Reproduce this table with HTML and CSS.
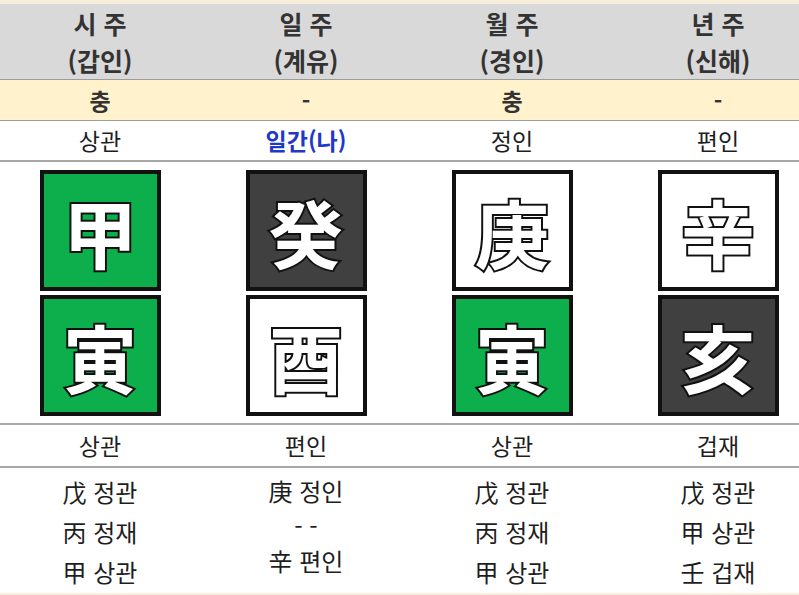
FILE: index.html
```html
<!DOCTYPE html>
<html lang="ko">
<head>
<meta charset="utf-8">
<title>사주 원국</title>
<link rel="stylesheet" href="styles.css">
</head>
<body>
<div class="table">
  <div class="row head">
    <div class="cell"><div>시 주</div><div>(갑인)</div></div>
    <div class="cell"><div>일 주</div><div>(계유)</div></div>
    <div class="cell"><div>월 주</div><div>(경인)</div></div>
    <div class="cell"><div>년 주</div><div>(신해)</div></div>
  </div>
  <div class="row clash">
    <div class="cell">충</div>
    <div class="cell">-</div>
    <div class="cell">충</div>
    <div class="cell">-</div>
  </div>
  <div class="row god">
    <div class="cell">상관</div>
    <div class="cell me">일간(나)</div>
    <div class="cell">정인</div>
    <div class="cell">편인</div>
  </div>
  <div class="row tiles">
    <div class="cell stack">
      <div class="tile green">甲</div>
      <div class="tile green">寅</div>
    </div>
    <div class="cell stack">
      <div class="tile dark">癸</div>
      <div class="tile white">酉</div>
    </div>
    <div class="cell stack">
      <div class="tile white">庚</div>
      <div class="tile green">寅</div>
    </div>
    <div class="cell stack">
      <div class="tile white">辛</div>
      <div class="tile dark">亥</div>
    </div>
  </div>
  <div class="row god2">
    <div class="cell">상관</div>
    <div class="cell">편인</div>
    <div class="cell">상관</div>
    <div class="cell">겁재</div>
  </div>
  <div class="row hidden">
    <div class="cell"><div>戊 정관</div><div>丙 정재</div><div>甲 상관</div></div>
    <div class="cell alt"><div>庚 정인</div><div class="dash">- -</div><div>辛 편인</div></div>
    <div class="cell"><div>戊 정관</div><div>丙 정재</div><div>甲 상관</div></div>
    <div class="cell"><div>戊 정관</div><div>甲 상관</div><div>壬 겁재</div></div>
  </div>
</div>
</body>
</html>
```

FILE: styles.css
```css
html, body {
  margin: 0;
  padding: 0;
}
body {
  background: #f6eedb;
  overflow: hidden;
  width: 799px;
  height: 595px;
  font-family: "Noto Sans CJK KR", "Noto Sans", sans-serif;
  color: #1e1e1e;
}
.table {
  width: 824px;
  margin: 4px 0 0 -3px;
  background: #ffffff;
}
.row {
  display: grid;
  grid-template-columns: repeat(4, 206px);
  border-bottom: 1px solid #9c9c9c;
}
.cell {
  text-align: center;
}
.head {
  background: #d9d9d9;
  height: 75px;
  font-size: 25px;
  font-weight: 700;
  line-height: 38px;
  color: #333333;
}
.head .cell div {
  height: 37px;
}
.clash {
  background: #fff2cc;
  height: 40px;
  line-height: 40px;
  font-size: 23px;
  font-weight: 700;
  color: #333333;
}
.god {
  height: 39px;
  line-height: 39px;
  font-size: 23px;
  border-bottom: 2px solid #a8a8a8;
}
.god .me {
  color: #1f38c8;
  font-weight: 700;
}
.tiles {
  padding: 8px 0 7px;
  border-bottom: 2px solid #a8a8a8;
}
.stack {
  display: flex;
  flex-direction: column;
  align-items: center;
  gap: 4px;
}
.tile {
  box-sizing: border-box;
  width: 121px;
  height: 121px;
  border: 4px solid #111111;
  display: flex;
  align-items: center;
  justify-content: center;
  font-family: "Noto Sans CJK KR", "Noto Sans CJK SC", sans-serif;
  font-weight: 700;
  font-size: 74px;
  line-height: 1;
  color: #ffffff;
  -webkit-text-stroke: 4px #111111;
  paint-order: stroke fill;
}
.green { background: #0caf4b; }
.dark { background: #404040; }
.white { background: #ffffff; }
.god2 {
  height: 41px;
  line-height: 41px;
  font-size: 23px;
  border-bottom: 2px solid #a8a8a8;
}
.hidden {
  height: 125px;
  padding-top: 4px;
  box-sizing: border-box;
  font-size: 24px;
  line-height: 40px;
  border-bottom: none;
}
.hidden .alt div {
  line-height: 37px;
}
.hidden .alt .dash {
  line-height: 33px;
}
```
